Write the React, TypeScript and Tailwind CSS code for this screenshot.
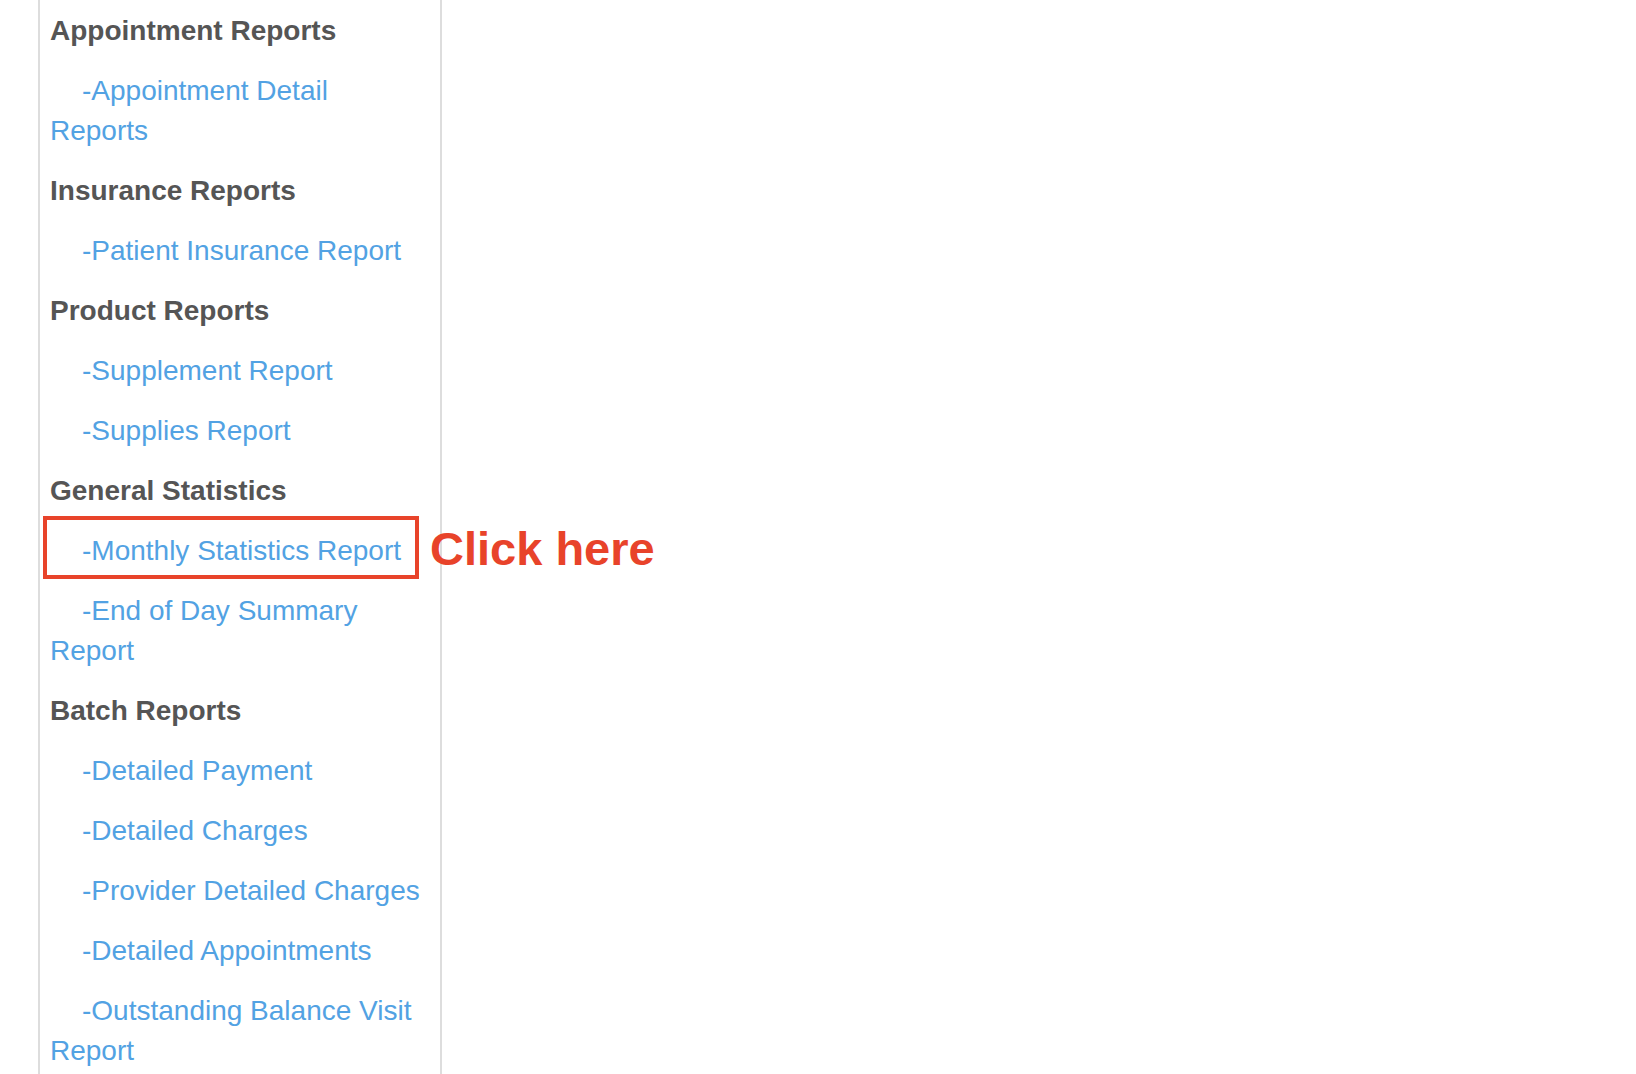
import React from "react";

type Item = { kind: "h" | "a"; text: string; highlight?: boolean };

const items: Item[] = [
  { kind: "h", text: "Appointment Reports" },
  { kind: "a", text: "-Appointment Detail Reports" },
  { kind: "h", text: "Insurance Reports" },
  { kind: "a", text: "-Patient Insurance Report" },
  { kind: "h", text: "Product Reports" },
  { kind: "a", text: "-Supplement Report" },
  { kind: "a", text: "-Supplies Report" },
  { kind: "h", text: "General Statistics" },
  { kind: "a", text: "-Monthly Statistics Report", highlight: true },
  { kind: "a", text: "-End of Day Summary Report" },
  { kind: "h", text: "Batch Reports" },
  { kind: "a", text: "-Detailed Payment" },
  { kind: "a", text: "-Detailed Charges" },
  { kind: "a", text: "-Provider Detailed Charges" },
  { kind: "a", text: "-Detailed Appointments" },
  { kind: "a", text: "-Outstanding Balance Visit Report" },
];

export default function App() {
  return (
    <div
      className="w-[1636px] h-[1074px] overflow-hidden bg-white"
      style={{ fontFamily: '"Liberation Sans", Arial, Helvetica, sans-serif' }}
    >
      <div className="ml-[38px] w-[404px] min-h-[1100px] pt-[1px] border-x-2 border-[#dddddd] bg-white">
        {items.map((it, i) =>
          it.kind === "h" ? (
            <div
              key={i}
              className="px-[10px] py-[10px] text-[28px] leading-[40px] font-bold text-[#555555]"
            >
              {it.text}
            </div>
          ) : (
            <div key={i} className="relative px-[10px] py-[10px]">
              <a
                href="#"
                className="block indent-[32px] text-[28px] leading-[40px] text-[#52a2e3] no-underline"
              >
                {it.text}
              </a>
              {it.highlight && (
                <>
                  <div className="absolute left-[3px] top-[-5px] w-[376px] h-[63px] border-4 border-[#e8432a] pointer-events-none" />
                  <div className="absolute left-[390px] top-[4px] whitespace-nowrap text-[47px] leading-none font-bold text-[#e8432a]">
                    Click here
                  </div>
                </>
              )}
            </div>
          )
        )}
      </div>
    </div>
  );
}
